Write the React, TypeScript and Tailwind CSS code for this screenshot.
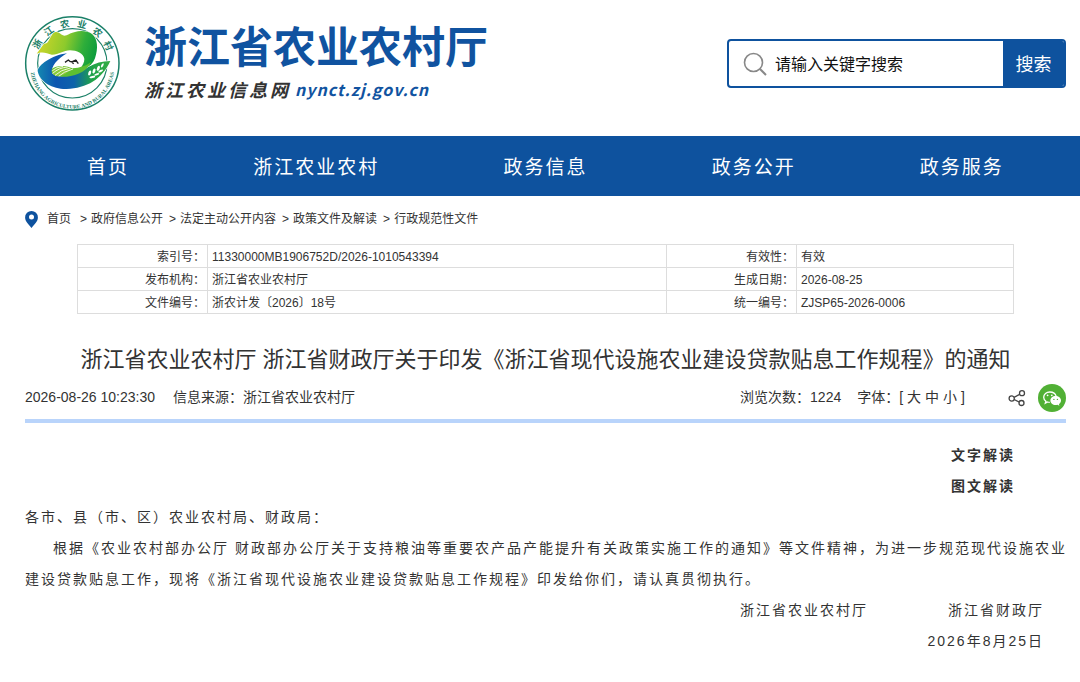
import React from "react";

const navItems = ["首页", "浙江农业农村", "政务信息", "政务公开", "政务服务"];

const crumbs = ["政府信息公开", "法定主动公开内容", "政策文件及解读", "行政规范性文件"];

const facts = [
  ["索引号：", "11330000MB1906752D/2026-1010543394", "有效性：", "有效"],
  ["发布机构：", "浙江省农业农村厅", "生成日期：", "2026-08-25"],
  ["文件编号：", "浙农计发〔2026〕18号", "统一编号：", "ZJSP65-2026-0006"],
];

function Emblem() {
  return (
    <svg viewBox="0 0 345 345" className="h-[115px] w-[115px]" role="img" aria-label="浙江省农业农村厅">
      <defs>
        <linearGradient id="hill" x1="0" y1="0.3" x2="1" y2="0.5">
          <stop offset="0" stopColor="#d0d629" />
          <stop offset="0.45" stopColor="#8dca2c" />
          <stop offset="0.75" stopColor="#2fae3a" />
          <stop offset="1" stopColor="#0a9b3d" />
        </linearGradient>
        <linearGradient id="river" x1="0" y1="0" x2="1" y2="0">
          <stop offset="0" stopColor="#1488b0" />
          <stop offset="0.25" stopColor="#0d56b0" />
          <stop offset="0.5" stopColor="#0d62ab" />
          <stop offset="0.75" stopColor="#1fa348" />
          <stop offset="1" stopColor="#35ac45" />
        </linearGradient>
        <path id="arcBottom" d="M46 185A126 126 0 0 0 298 185" />
      </defs>
      <circle cx="172" cy="175" r="140" fill="#fff" stroke="#1b8068" strokeWidth="4.500" />
      <circle cx="172" cy="175" r="104" fill="none" stroke="#1b8068" strokeWidth="3.500" />
      <path d="M65 146L84 120C90 112 94 118 99 110C108 96 112 82 122 81C134 80 136 90 148 92C158 92 164 84 180 81C196 76 220 78 232 88C248 102 250 130 240 160C230 186 200 205 160 215C190 200 208 182 208 162C206 145 185 136 165 136C145 136 130 150 110 149C96 145 82 138 65 146Z" fill="url(#hill)" stroke="#fff" strokeWidth="4" paintOrder="stroke" />
      <path d="M156 145C110 150 68 182 68 198C74 232 115 253 155 252C215 250 262 222 286 168C262 168 240 174 220 186C190 206 130 225 112 205C105 185 130 160 156 145Z" fill="url(#river)" stroke="#fff" strokeWidth="4" paintOrder="stroke" />
      <path d="M110 192C125 180 150 180 172 190C195 188 215 182 228 170C222 192 190 212 155 215C130 217 113 210 110 192Z" fill="#5fbf32" />
      <path d="M110 196C125 182 150 180 168 190C158 206 138 216 122 213C112 208 110 204 110 196Z" fill="#8bcb3a" />
      <path d="M113 205Q132 188 158 186M120 211Q138 194 166 189M131 214Q145 200 174 192M112 197Q124 186 144 184" fill="none" stroke="#fff" strokeWidth="2.500" />
      <path d="M150 172L160 165L166 170L173 169L182 165L190 176M173 169L186 168M170 171L176 176" fill="none" stroke="#222" strokeWidth="4" strokeLinejoin="round" />
      <g fill="#fff">
        <ellipse cx="224" cy="204" rx="4" ry="8" transform="rotate(20 224 204)" />
        <ellipse cx="237" cy="198" rx="4" ry="8" transform="rotate(20 237 198)" />
        <ellipse cx="250" cy="190" rx="4" ry="8" transform="rotate(24 250 190)" />
        <ellipse cx="262" cy="181" rx="3" ry="7" transform="rotate(28 262 181)" />
        <ellipse cx="232" cy="216" rx="3" ry="9" transform="rotate(78 232 216)" />
        <ellipse cx="245" cy="208" rx="3" ry="8" transform="rotate(70 245 208)" />
        <ellipse cx="257" cy="198" rx="3" ry="8" transform="rotate(62 257 198)" />
      </g>
      <g fill="#1b8068" className="font-['Noto_Sans_CJK_SC',sans-serif] text-[28px] font-bold">
        {["浙", "江", "农", "业", "农", "村"].map((char, i) => (
          <text key={i} x="172" y="65" textAnchor="middle" transform={`rotate(${-61 + i * 25} 172 175)`}>
            {char}
          </text>
        ))}
      </g>
      <text fill="#1b8068" className="font-['Liberation_Serif',serif] text-[16px] font-bold">
        <textPath href="#arcBottom" startOffset="50%" textAnchor="middle">
          ZHEJIANG AGRICULTURE AND RURAL AREAS
        </textPath>
      </text>
    </svg>
  );
}

function WechatIcon() {
  return (
    <svg viewBox="0 0 28 28" className="h-7 w-7" aria-hidden="true">
      <circle cx="14" cy="14" r="14" fill="#51b035" />
      <path d="M11.800 18.300c-.8 0-1.500-.1-2.200-.3l-2.300 1.200.6-2c-1.400-1-2.200-2.400-2.200-4 0-2.900 2.700-5.200 6.100-5.200 3.200 0 5.700 1.700 6.300 4.200" fill="none" stroke="#fff" strokeWidth="1.300" />
      <circle cx="9.600" cy="11.300" r="0.900" fill="#fff" />
      <circle cx="13.800" cy="11.300" r="0.900" fill="#fff" />
      <path d="M17.600 12c-2.900 0-5.200 2-5.200 4.500s2.300 4.500 5.200 4.500c.6 0 1.200-.1 1.800-.3l2 1.100-.5-1.700c1.300-.8 2.100-2.100 2.100-3.600 0-2.500-2.400-4.500-5.400-4.500z" fill="#fff" />
      <circle cx="15.900" cy="15.400" r="0.700" fill="#51b035" />
      <circle cx="19.400" cy="15.400" r="0.700" fill="#51b035" />
    </svg>
  );
}

function ShareIcon() {
  return (
    <svg viewBox="0 0 18 18" className="h-[18px] w-[18px]" fill="none" stroke="#444" strokeWidth="1.300" aria-hidden="true">
      <circle cx="3.700" cy="9.500" r="2.600" />
      <circle cx="14" cy="4.200" r="2.500" />
      <circle cx="13.500" cy="14" r="2.500" />
      <path d="M6 8.300L11.700 5.400M6.200 10.500L11.200 13" />
    </svg>
  );
}

export default function App() {
  return (
    <div className="bg-white font-['Liberation_Sans','Noto_Sans_CJK_SC',sans-serif] text-[#333]">
      <header className="flex h-[136px] items-start justify-between pr-[14px] pl-[15px]">
        <div className="flex items-start pt-[5px]">
          <Emblem />
          <div className="pt-3 pl-[14px] font-['Noto_Sans_CJK_SC',sans-serif] font-bold">
            <h1 className="text-[43px] leading-[54px] text-[#1053a0]">浙江省农业农村厅</h1>
            <p className="flex gap-1 text-[18px] leading-[36px] tracking-[3px] italic">
              <span>浙江农业信息网</span>
              <a href="#site" className="text-[16px] tracking-[1px] text-[#1053a0]">nynct.zj.gov.cn</a>
            </p>
          </div>
        </div>
        <form className="mt-[39px] flex h-[49px] w-[339px] overflow-hidden rounded border-2 border-[#0e529e]" onSubmit={(e) => e.preventDefault()}>
          <label htmlFor="keyword" className="flex items-center pl-[14px]">
            <svg viewBox="0 0 24 24" className="h-6 w-6" fill="none" stroke="#888" strokeWidth="1.600" aria-label="搜索关键字">
              <circle cx="10.500" cy="10.500" r="9" />
              <path d="M17 17L23 23" strokeWidth="2" />
            </svg>
          </label>
          <input
            id="keyword"
            type="text"
            placeholder="请输入关键字搜索"
            className="min-w-0 flex-1 px-2 pt-0.5 text-[16px] outline-none placeholder:text-[#111]"
          />
          <button type="submit" className="w-[61px] bg-[#0e529e] pt-1 text-[18px] text-white">搜索</button>
        </form>
      </header>

      <nav className="flex h-[60px] items-center justify-around bg-[#0e529e] pt-1 pr-[14px] pl-[25px] text-[19px] tracking-[2px] text-white">
        {navItems.map((item) => (
          <a key={item} href="#nav">{item}</a>
        ))}
      </nav>

      <main className="pr-[14px] pl-[25px]">
        <div className="flex h-[48px] items-center pb-0.5 text-[12px]">
          <svg viewBox="0 0 13 17" className="mr-[9px] h-[17px] w-[13px]" aria-hidden="true">
            <path d="M6.500 0A6.400 6.400 0 0 0 .1 6.400C.1 10.500 4 13.500 6.500 17C9 13.500 12.900 10.500 12.900 6.400A6.400 6.400 0 0 0 6.500 0Z" fill="#0e529e" />
            <circle cx="6.500" cy="6" r="2.500" fill="#fff" />
          </svg>
          <a href="#home" className="mr-[9px]">首页</a>
          {crumbs.map((crumb) => (
            <span key={crumb} className="mr-[6px] flex gap-1">
              <span>&gt;</span>
              <a href="#crumb">{crumb}</a>
            </span>
          ))}
        </div>

        <div className="px-[52px]">
          <table className="w-full table-fixed border-collapse text-[12px] leading-[20px]">
            <colgroup>
              <col className="w-[130px]" />
              <col />
              <col className="w-[130px]" />
              <col className="w-[217px]" />
            </colgroup>
            <tbody>
              {facts.map((row) => (
                <tr key={row[0]}>
                  <th scope="row" className="h-[23px] border border-[#ddd] p-0 pt-0.5 pr-0.5 text-right font-normal">{row[0]}</th>
                  <td className="h-[23px] border border-[#ddd] p-0 pt-0.5 pl-1">{row[1]}</td>
                  <th scope="row" className="h-[23px] border border-[#ddd] p-0 pt-0.5 pr-0.5 text-right font-normal">{row[2]}</th>
                  <td className="h-[23px] border border-[#ddd] p-0 pt-0.5 pl-1">{row[3]}</td>
                </tr>
              ))}
            </tbody>
          </table>
        </div>

        <h2 className="mt-[30px] text-center text-[22px] leading-[32px]">
          浙江省农业农村厅 浙江省财政厅关于印发《浙江省现代设施农业建设贷款贴息工作规程》的通知
        </h2>

        <div className="flex h-[47px] items-center justify-between border-b-4 border-[#b9d4fb] text-[14px]">
          <div className="flex gap-[18px]">
            <time>2026-08-26 10:23:30</time>
            <span>信息来源：浙江省农业农村厅</span>
          </div>
          <div className="flex items-center">
            <span className="mr-4">浏览次数：1224</span>
            <span className="mr-[43px] flex gap-1">
              <span>字体：[</span>
              <button type="button">大</button>
              <button type="button">中</button>
              <button type="button">小</button>
              <span>]</span>
            </span>
            <button type="button" aria-label="分享" className="mr-3"><ShareIcon /></button>
            <button type="button" aria-label="微信"><WechatIcon /></button>
          </div>
        </div>

        <article className="-mr-1 pt-[17px] pb-[25px] text-[14px] leading-[31px] tracking-[2px]">
          <div className="flex flex-col items-end pr-[55px] font-bold">
            <a href="#text">文字解读</a>
            <a href="#graphic">图文解读</a>
          </div>
          <p>各市、县（市、区）农业农村局、财政局：</p>
          <p className="indent-[28px]">
            根据《农业农村部办公厅 财政部办公厅关于支持粮油等重要农产品产能提升有关政策实施工作的通知》等文件精神，为进一步规范现代设施农业建设贷款贴息工作，现将《浙江省现代设施农业建设贷款贴息工作规程》印发给你们，请认真贯彻执行。
          </p>
          <p className="flex justify-end gap-20 pr-[26px]">
            <span>浙江省农业农村厅</span>
            <span>浙江省财政厅</span>
          </p>
          <p className="pr-[26px] text-right">2026年8月25日</p>
        </article>
      </main>
    </div>
  );
}
